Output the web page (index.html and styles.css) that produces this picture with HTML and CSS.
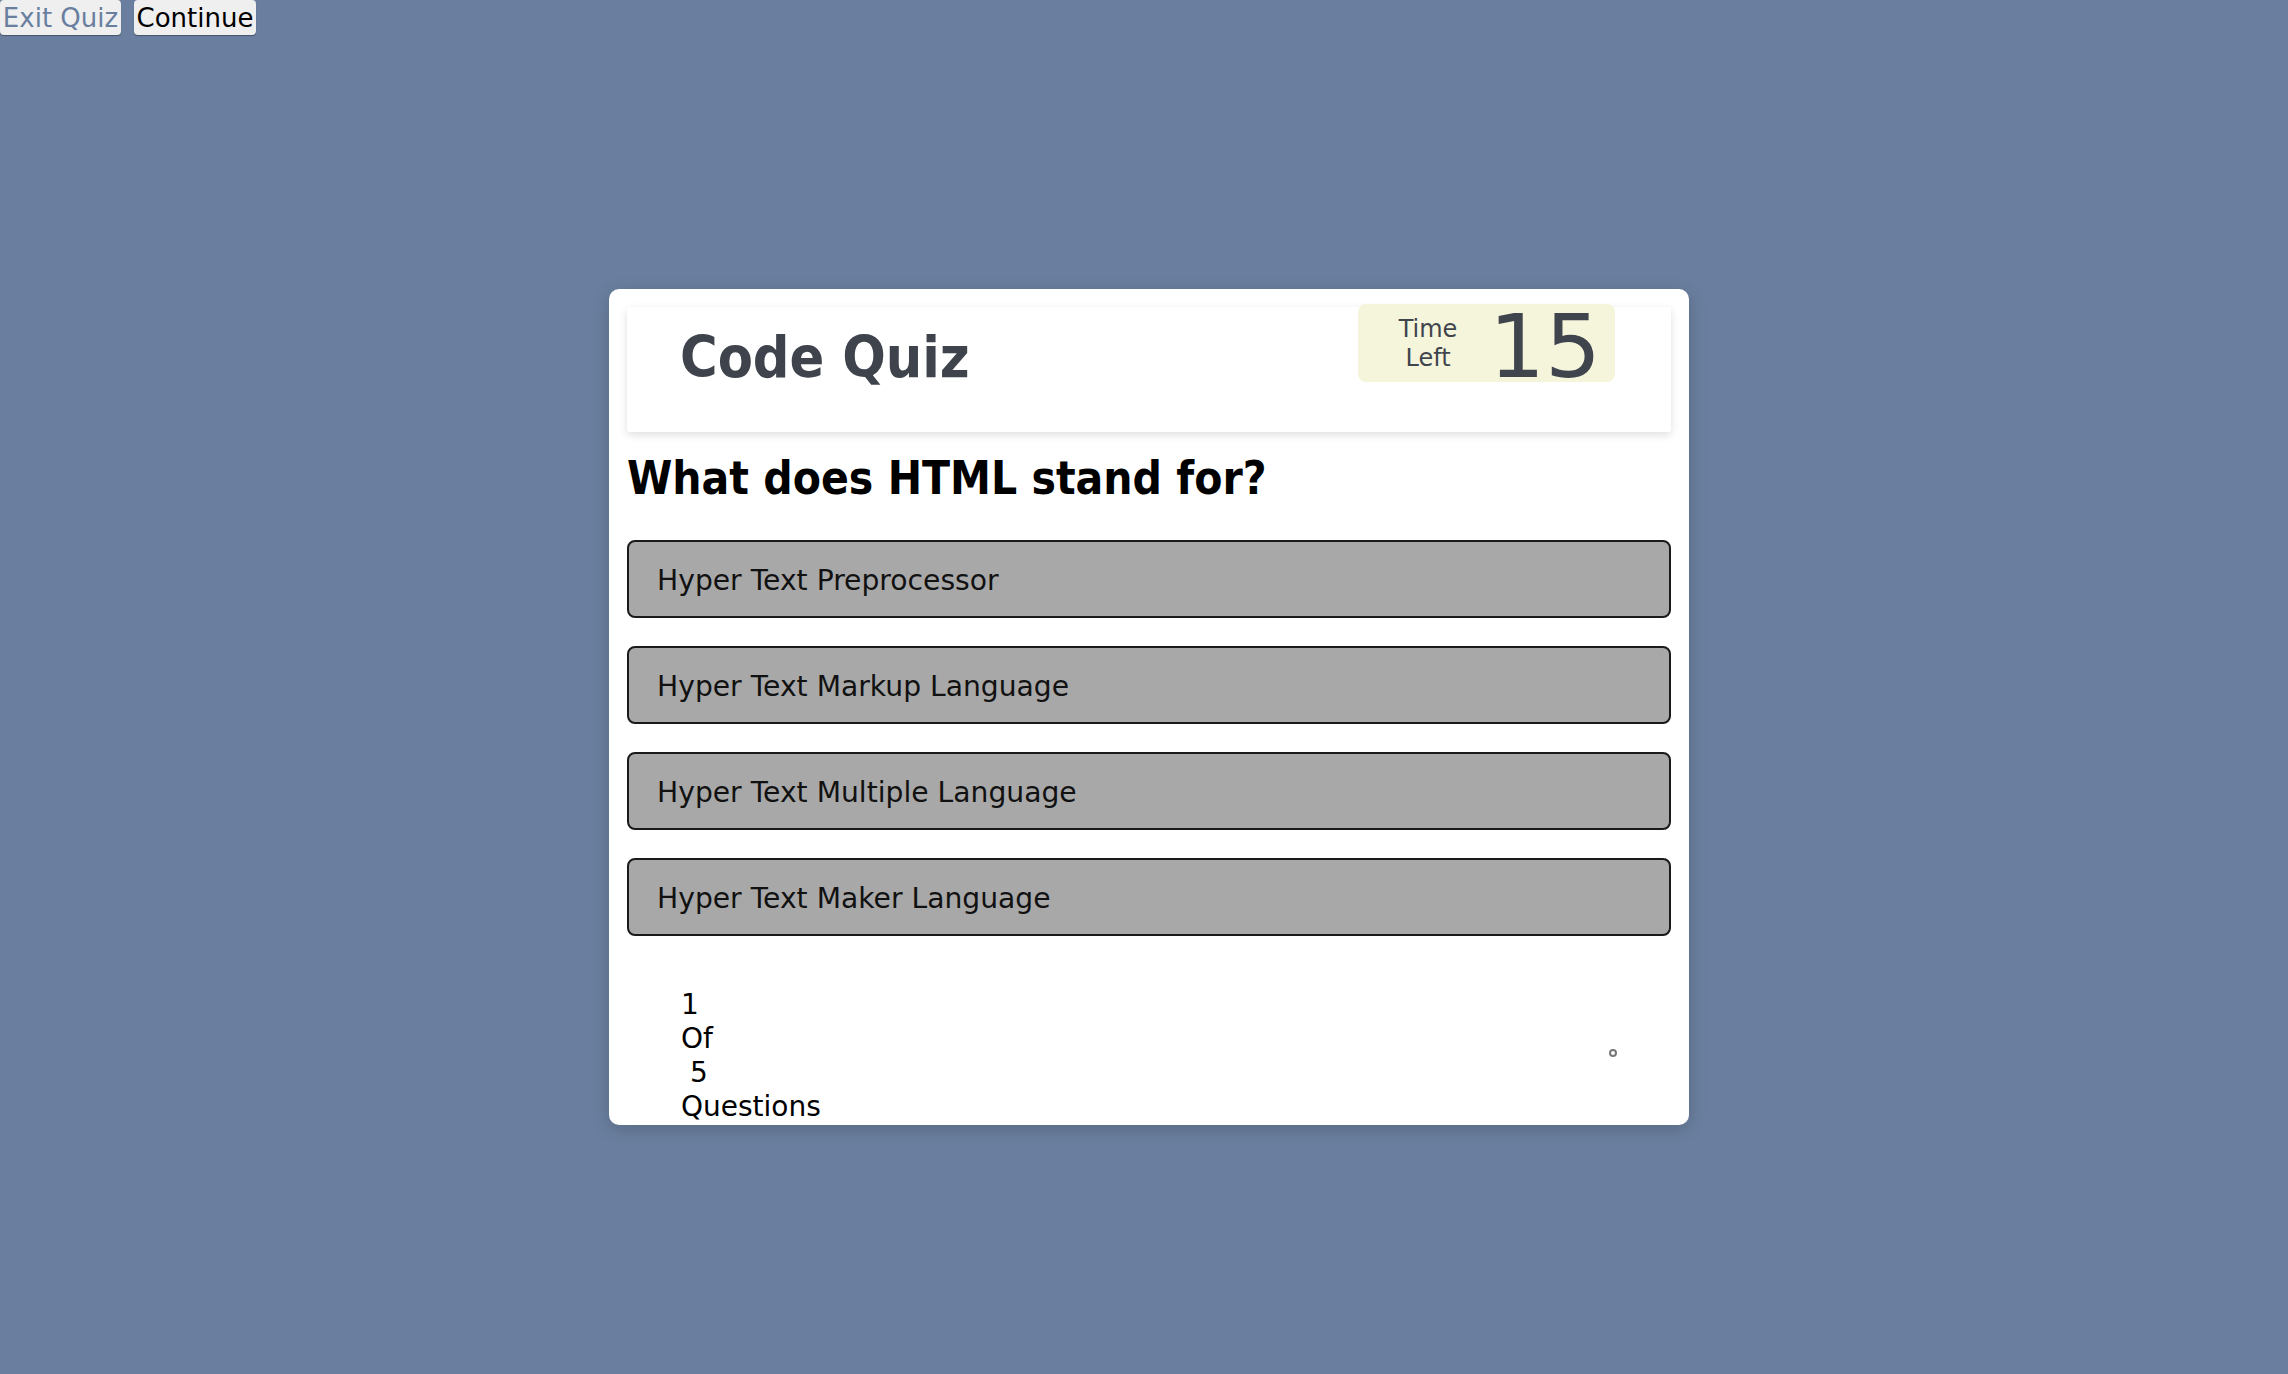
FILE: index.html
```html
<!DOCTYPE html>
<html lang="en">
<head>
<meta charset="utf-8">
<title>Code Quiz</title>
<link rel="stylesheet" href="styles.css">
</head>
<body>
<div class="topbar">
  <button class="btn btn-exit">Exit Quiz</button>
  <button class="btn">Continue</button>
</div>
<main class="card">
  <header class="quiz-header">
    <h1 class="title">Code Quiz</h1>
    <div class="timer">
      <div class="timer-label">Time<br>Left</div>
      <div class="timer-value">15</div>
    </div>
  </header>
  <h2 class="question">What does HTML stand for?</h2>
  <ul class="options">
    <li class="option">Hyper Text Preprocessor</li>
    <li class="option">Hyper Text Markup Language</li>
    <li class="option">Hyper Text Multiple Language</li>
    <li class="option">Hyper Text Maker Language</li>
  </ul>
  <footer class="quiz-footer">
    <div class="counter">
      <span class="line">1</span>
      <span class="line">Of</span>
      <span class="line">&nbsp;5</span>
      <span class="line">Questions</span>
    </div>
    <span class="dot"></span>
  </footer>
</main>
</body>
</html>
```
FILE: styles.css
```css
html, body {
  margin: 0;
  padding: 0;
}
body {
  background: #6a7f9f;
  font-family: "DejaVu Sans", "Liberation Sans", sans-serif;
  min-height: 1374px;
}
.topbar {
  display: flex;
  gap: 13px;
  height: 35px;
}
.btn {
  font-family: "DejaVu Sans", sans-serif;
  font-size: 26px;
  height: 35px;
  padding: 1px 2px 0;
  margin: 0;
  border: none;
  border-radius: 4px;
  background: #efefef;
  color: #000;
  box-shadow: 0 1px 1px rgba(0, 0, 0, 0.35);
  line-height: 34px;
}
.btn-exit {
  color: #6a7f9f;
  width: 121px;
}
.btn + .btn {
  width: 122px;
}
.card {
  display: block;
  box-sizing: border-box;
  width: 1080px;
  margin: 254px 0 0 calc(50% - 535px);
  padding: 18px 18px 1px 18px;
  background: #fff;
  border-radius: 10px;
  box-shadow: 0 4px 18px rgba(0, 0, 0, 0.18);
}
.quiz-header {
  box-sizing: border-box;
  height: 125px;
  display: flex;
  justify-content: space-between;
  align-items: flex-start;
  padding: 0 56px 0 53px;
  background: #fff;
  border-radius: 3px;
  box-shadow: 0 3px 8px rgba(0, 0, 0, 0.13);
}
.title {
  margin: 17px 0 0;
  font-family: "DejaVu Sans Condensed", "DejaVu Sans", sans-serif;
  font-stretch: condensed;
  font-weight: bold;
  font-size: 57px;
  color: #3f444c;
}
.timer {
  margin-top: -3px;
  height: 78px;
  box-sizing: border-box;
  display: flex;
  align-items: center;
  padding: 0 14px 0 40px;
  background: #f5f5dc;
  border-radius: 8px;
  color: #40454d;
}
.timer-label {
  width: 60px;
  padding-top: 2px;
  text-align: center;
  font-size: 24px;
  line-height: 29px;
}
.timer-value {
  margin-left: 31px;
  font-size: 88px;
  line-height: 70px;
  padding-top: 8px;
}
.question {
  margin: 20px 0 35px;
  font-family: "DejaVu Sans Condensed", "DejaVu Sans", sans-serif;
  font-stretch: condensed;
  font-weight: bold;
  font-size: 45.7px;
  color: #000;
}
.options {
  list-style: none;
  margin: 0;
  padding: 0;
  display: flex;
  flex-direction: column;
  gap: 28px;
}
.option {
  box-sizing: border-box;
  height: 78px;
  display: flex;
  align-items: center;
  padding: 2px 0 0 28px;
  border: 2px solid #1a1a1a;
  border-radius: 8px;
  background: #a8a8a8;
  font-size: 28.2px;
  color: #111;
}
.quiz-footer {
  margin-top: 52px;
  display: flex;
  justify-content: space-between;
  align-items: center;
  padding: 0 54px 0 54px;
}
.counter {
  display: flex;
  flex-direction: column;
  font-size: 28px;
  line-height: 34px;
  color: #000;
}
.line {
  white-space: pre;
}
.dot {
  width: 8px;
  height: 8px;
  margin-bottom: 6px;
  box-sizing: border-box;
  border: 2px solid #777;
  border-radius: 50%;
}
```
